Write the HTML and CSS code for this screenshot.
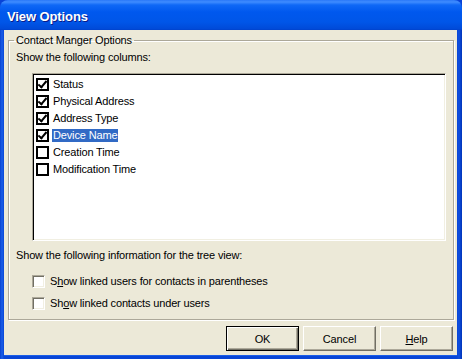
FILE: index.html
```html
<!DOCTYPE html>
<html lang="en">
<head>
    <meta charset="UTF-8">
    <title>View Options</title>
    <link rel="stylesheet" href="styles.css">
</head>
<body>

    <div class="window">
        <!-- Title Bar -->
        <div class="titlebar">View Options</div>

        <div class="client">
            <fieldset class="group">
                <legend>Contact Manger Options</legend>
                <div class="caption">Show the following columns:</div>

                <!-- Column List -->
                <div class="listbox">
                    <div class="item"><span class="tick on"></span><span class="label">Status</span></div>
                    <div class="item"><span class="tick on"></span><span class="label">Physical Address</span></div>
                    <div class="item"><span class="tick on"></span><span class="label">Address Type</span></div>
                    <div class="item"><span class="tick on"></span><span class="label selected">Device Name</span></div>
                    <div class="item"><span class="tick"></span><span class="label">Creation Time</span></div>
                    <div class="item"><span class="tick"></span><span class="label">Modification Time</span></div>
                </div>

                <div class="caption tree-caption">Show the following information for the tree view:</div>

                <label class="option"><span class="box"></span>S<u>h</u>ow linked users for contacts in parentheses</label>
                <label class="option"><span class="box"></span>Sh<u>o</u>w linked contacts under users</label>
            </fieldset>

            <!-- Dialog Buttons -->
            <div class="buttons">
                <button class="btn default">OK</button>
                <button class="btn">Cancel</button>
                <button class="btn"><u>H</u>elp</button>
            </div>
        </div>
    </div>

</body>
</html>
```

FILE: styles.css
```css
* {
    margin: 0;
    padding: 0;
    box-sizing: border-box;
}
body {
    font-family: "Liberation Sans", Arial, sans-serif;
    font-size: 11px;
    letter-spacing: -0.15px;
    color: black;
    background: #0843d7;
    overflow: hidden;
}
.window {
    width: 462px;
    height: 359px;
    display: flex;
    flex-direction: column;
    border-radius: 8px 8px 0 0;
    background: linear-gradient(90deg, #0841d0, #1a5ee8 2px, #0845d6 4px, #0845d6 calc(100% - 5px), #1050e0 calc(100% - 3px), #0034b8);
    overflow: hidden;
}
.titlebar {
    height: 30px;
    padding: 9px 0 0 7px;
    font-size: 13px;
    font-weight: bold;
    letter-spacing: -0.1px;
    color: white;
    text-shadow: 1px 1px #0a1c8a;
    background: linear-gradient(#2a78f8 0, #3f8cff 2px, #0f68f6 5px, #0058ee 12px, #0056e8 22px, #004ad8 29px, #0040c8 30px);
}
.client {
    flex: 1;
    margin: 0 5px 4px 4px;
    padding: 0 3px 0 4px;
    background: #ece9d8;
    box-shadow: 0 1px 0 #1a5ee8;
}
.group {
    margin-top: 4px;
    height: 286px;
    border: 1px solid #aca899;
    box-shadow: inset 1px 1px #fff, 1px 1px #fff;
    padding: 0 6px;
}
.group legend {
    padding: 0 2px;
    line-height: 13px;
    margin-left: -1px;
}
.caption {
    margin-top: 4px;
    line-height: 13px;
    margin-left: 1px;
}
.listbox {
    margin: 9px 0 0 17px;
    width: 414px;
    height: 168px;
    background: white;
    border: 1px solid;
    border-color: #aca899 #fff #fff #aca899;
    box-shadow: inset 1px 1px #000, inset -1px -1px #f1efe2;
    padding: 2px 0 0 3px;
}
.item {
    display: flex;
    align-items: center;
    height: 17px;
}
.tick {
    width: 13px;
    height: 13px;
    border: 2px solid black;
    background: white;
    display: flex;
    align-items: center;
    justify-content: center;
}
.tick.on::after {
    content: "";
    width: 3px;
    height: 7px;
    border: solid black;
    border-width: 0 2px 2px 0;
    transform: translate(0, -1px) rotate(40deg);
}
.label {
    margin-left: 3px;
    padding: 0 1px;
    line-height: 13px;
}
.label.selected {
    background: #316ac5;
    color: white;
}
.tree-caption {
    margin-top: 8px;
}
.option {
    display: flex;
    align-items: center;
    height: 22px;
    margin-left: 17px;
}
.option:first-of-type {
    margin-top: 8px;
}
.box {
    width: 13px;
    height: 13px;
    margin-right: 5px;
    background: white;
    border: 1px solid;
    border-color: #aca899 #fff #fff #aca899;
    box-shadow: inset 1px 1px #716f64, inset -1px -1px #f1efe2;
}
.buttons {
    display: flex;
    justify-content: flex-end;
    gap: 4px;
    margin-top: 6px;
    padding-right: 1px;
}
.btn {
    width: 73px;
    height: 25px;
    font-family: inherit;
    font-size: 11px;
    letter-spacing: -0.15px;
    color: black;
    background: #ece9d8;
    border: 1px solid;
    border-color: #fff #716f64 #716f64 #fff;
    box-shadow: inset -1px -1px #aca899;
    cursor: pointer;
}
.btn.default {
    border: 1px solid black;
    box-shadow: inset 1px 1px #fff, inset -1px -1px #716f64, inset -2px -2px #aca899;
}
```
